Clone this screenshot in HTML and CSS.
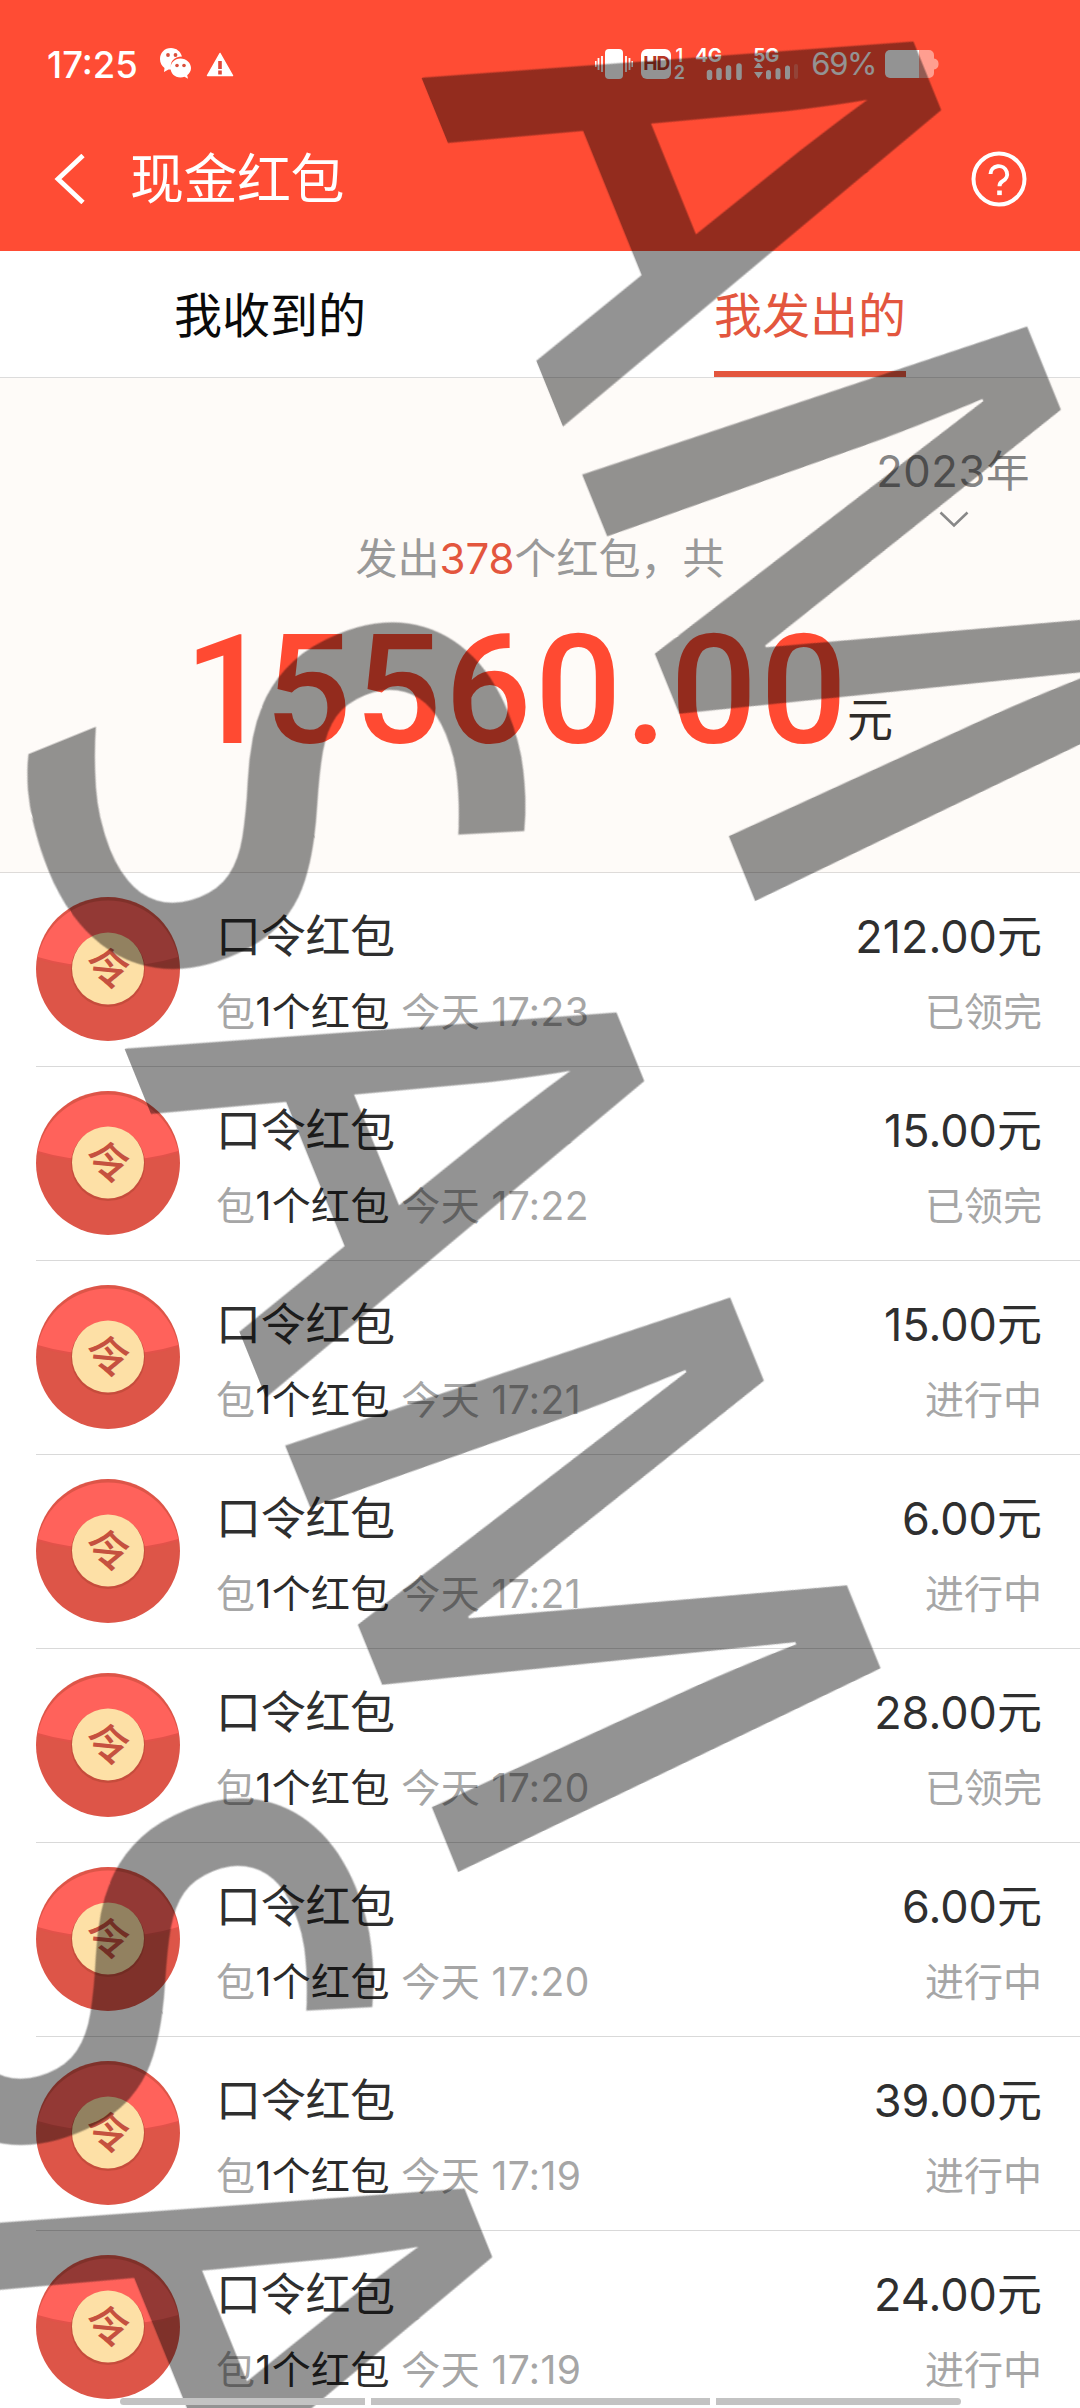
FILE: index.html
```html
<!DOCTYPE html>
<html lang="zh-CN">
<head>
<meta charset="utf-8">
<title>现金红包</title>
<link rel="stylesheet" href="styles.css">
</head>
<body>
<svg class="defs" aria-hidden="true">
  <symbol id="packet" viewBox="0 0 144 144">
    <circle cx="72" cy="72" r="72" fill="#dd5548"/>
    <path d="M1.5 61A72 72 0 0 1 142.500 61Q110 71 72 71T1.500 61Z" fill="#ff625b"/>
    <path d="M1.500 61Q34 71 72 71T142.500 61" fill="none" stroke="#e2524a" stroke-width="2"/>
    <circle cx="72" cy="73" r="37" fill="#c64c3c"/>
    <circle cx="72" cy="71.500" r="36" fill="#fde0a6"/>
    <text x="72" y="88" text-anchor="middle" transform="rotate(6 72 72)" class="packet-char">令</text>
  </symbol>
</svg>
<div class="screen">
  <header class="header">
    <div class="status">
      <span class="clock">17:25</span>
      <svg class="ic-wechat" width="31" height="32" viewBox="0 0 31 32">
        <path d="M11 0C4.500 0 0 4.800 0 11c0 4 1.800 7 4.500 9L4 24l4.500-2.500h3C9 14 14 8.500 22 8.500 20.500 3.500 16.500 0 11 0Z" fill="#fff"/>
        <path d="M20.500 10.500C14.500 10.500 10.500 15 10.500 20s4 9.500 10 9.500c1.500 0 2.800-.2 4-.7l3.500 2-.8-3.500C29.500 25.500 31 23 31 20c0-5-4.500-9.500-10.500-9.500Z" fill="#fff"/>
        <circle cx="8" cy="7" r="1.900" fill="#d9503c"/><circle cx="15.500" cy="7" r="1.900" fill="#d9503c"/>
        <circle cx="17" cy="17.500" r="1.800" fill="#d9503c"/><circle cx="24" cy="17.500" r="1.800" fill="#d9503c"/>
      </svg>
      <svg class="ic-warn" width="28" height="25" viewBox="0 0 28 25">
        <path d="M14 1.500 26.500 23.500H1.500Z" fill="#fff" stroke="#fff" stroke-width="1.500" stroke-linejoin="round"/>
        <path d="M14 9v8M14 18.500v4" stroke="#e0483a" stroke-width="3.600"/>
      </svg>
      <div class="status-right">
        <svg width="38" height="32" viewBox="0 0 38 32">
          <rect x="10" y="1" width="18" height="30" rx="4" fill="#fff"/>
          <path d="M7 8v16M31 8v16M3.500 10v12M34.500 10v12M.7 13v6M37.300 13v6" stroke="#fff" stroke-width="1.800"/>
        </svg>
        <span class="hd">HD</span>
        <span class="sims"><i>1</i><i>2</i></span>
        <div class="net net-4g">
          <span class="gen">4G</span>
          <svg width="38" height="17" viewBox="0 0 38 17"><path d="M3.500 9.500v5M13 7.500v7M22.500 5v9.500M33 3v11.500" stroke="#fff" stroke-width="5.500" stroke-linecap="round"/></svg>
        </div>
        <div class="net net-5g">
          <span class="gen">5G</span>
          <svg width="48" height="17" viewBox="0 0 48 17"><path d="M1 5 5.500-1 10 5ZM1 9h9l-4.500 6.500Z" fill="#fff"/><path d="M15.500 9.500v4.500M25 7.500v6.500M34.500 5v9" stroke="#fff" stroke-width="5" stroke-linecap="round"/><path d="M43 3v11" stroke="#ff7660" stroke-width="4" stroke-linecap="round"/></svg>
        </div>
        <span class="pct">69%</span>
        <svg width="54" height="28" viewBox="0 0 54 28">
          <path d="M6 0H44a5 5 0 0 1 5 5v3.500a5 5 0 0 1 4.500 5.500 5 5 0 0 1-4.500 5.500V23a5 5 0 0 1-5 5H6Z" fill="#ff9e90"/>
          <path d="M5 0H34V28H5a5 5 0 0 1-5-5V5a5 5 0 0 1 5-5Z" fill="#fff"/>
        </svg>
      </div>
    </div>
    <div class="nav">
      <svg class="back" width="34" height="50" viewBox="0 0 34 50"><path d="M30 1.500 5 25 30 48.500" fill="none" stroke="#fff" stroke-width="4.800"/></svg>
      <h1>现金红包</h1>
      <svg class="help" width="56" height="56" viewBox="0 0 56 56">
        <circle cx="28" cy="28" r="25.500" fill="none" stroke="#fff" stroke-width="4"/>
        <path d="M19.500 23a8.300 8 0 1 1 12 7.300q-3 1.700-3 5" fill="none" stroke="#fff" stroke-width="4"/>
        <rect x="26.200" y="39.500" width="4.600" height="4.600" fill="#fff"/>
      </svg>
    </div>
  </header>

  <nav class="tabs">
    <div class="tab"><span>我收到的</span></div>
    <div class="tab active"><span>我发出的</span></div>
  </nav>

  <section class="summary">
    <div class="year"><span>2023年</span>
      <svg width="30" height="17" viewBox="0 0 30 17"><path d="M1.500 1.500 15 14.500 28.500 1.500" fill="none" stroke="#888" stroke-width="2.600"/></svg>
    </div>
    <p class="count">发出<b>378</b>个红包，共</p>
    <p class="total"><strong>15560.00</strong><span>元</span></p>
  </section>

  <ul class="list">
    <li><svg class="pk"><use href="#packet"/></svg><div class="info"><div class="t">口令红包</div><div class="s">包<b>1个红包</b> 今天 17:23</div></div><div class="amt"><div class="t">212.00元</div><div class="s">已领完</div></div></li>
    <li><svg class="pk"><use href="#packet"/></svg><div class="info"><div class="t">口令红包</div><div class="s">包<b>1个红包</b> 今天 17:22</div></div><div class="amt"><div class="t">15.00元</div><div class="s">已领完</div></div></li>
    <li><svg class="pk"><use href="#packet"/></svg><div class="info"><div class="t">口令红包</div><div class="s">包<b>1个红包</b> 今天 17:21</div></div><div class="amt"><div class="t">15.00元</div><div class="s">进行中</div></div></li>
    <li><svg class="pk"><use href="#packet"/></svg><div class="info"><div class="t">口令红包</div><div class="s">包<b>1个红包</b> 今天 17:21</div></div><div class="amt"><div class="t">6.00元</div><div class="s">进行中</div></div></li>
    <li><svg class="pk"><use href="#packet"/></svg><div class="info"><div class="t">口令红包</div><div class="s">包<b>1个红包</b> 今天 17:20</div></div><div class="amt"><div class="t">28.00元</div><div class="s">已领完</div></div></li>
    <li><svg class="pk"><use href="#packet"/></svg><div class="info"><div class="t">口令红包</div><div class="s">包<b>1个红包</b> 今天 17:20</div></div><div class="amt"><div class="t">6.00元</div><div class="s">进行中</div></div></li>
    <li><svg class="pk"><use href="#packet"/></svg><div class="info"><div class="t">口令红包</div><div class="s">包<b>1个红包</b> 今天 17:19</div></div><div class="amt"><div class="t">39.00元</div><div class="s">进行中</div></div></li>
    <li><svg class="pk"><use href="#packet"/></svg><div class="info"><div class="t">口令红包</div><div class="s">包<b>1个红包</b> 今天 17:19</div></div><div class="amt"><div class="t">24.00元</div><div class="s">进行中</div></div></li>
  </ul>

  <div class="mark mark-1"><span class="ms">S</span><span class="ma">A</span><span class="mm">M</span></div>
  <div class="mark mark-2"><span class="ms">S</span><span class="ma">A</span><span class="mm">M</span></div>
  <div class="mark mark-3"><span class="ms">S</span><span class="ma">A</span><span class="mm">M</span></div>

  <div class="homebar"><i></i><i></i><i></i></div>
</div>
</body>
</html>
```
FILE: styles.css
```css
* { box-sizing: border-box; margin: 0; padding: 0; }
body {
  width: 1080px;
  height: 2408px;
  overflow: hidden;
  background: #fff;
  font-family: Inter, "Noto Sans CJK SC", sans-serif;
  color: #2f2f2f;
}
b, i { font-weight: inherit; font-style: normal; }
svg { display: block; flex: none; }
.defs { position: absolute; width: 0; height: 0; }
.screen { position: relative; width: 1080px; height: 2408px; overflow: hidden; }

.header { height: 251px; background: #ff4c34; color: #fff; }
.status { height: 88px; padding: 40px 141px 0 47px; display: flex; align-items: center; }
.clock { font-size: 36.500px; width: 94px; white-space: nowrap; font-weight: 500; letter-spacing: 0; line-height: 46px; padding-top: 2px; }
.ic-wechat { margin-left: 19px; }
.ic-warn { margin-left: 15px; }
.status-right { flex: 1; display: flex; align-items: center; justify-content: flex-end; }
.hd { width: 30px; height: 30px; margin-left: 8px; border-radius: 6px; background: #fff; color: #b53624; font-size: 19px; font-weight: 700; letter-spacing: -1px; line-height: 30px; text-align: center; }
.sims { display: flex; flex-direction: column; width: 12px; margin-left: 2px; font-size: 18px; line-height: 17px; font-weight: 600; align-items: center; }
.net { display: flex; flex-direction: column; height: 31px; }
.gen { font-size: 19px; line-height: 14px; font-weight: 700; letter-spacing: -0.500px; }
.net-4g { margin-left: 10px; }
.net-4g svg { margin-left: 11px; }
.net-5g { margin-left: 9px; }
.pct { margin: 0 9px 0 10px; font-size: 31px; line-height: 32px; letter-spacing: -1.400px; }

.nav { display: flex; align-items: center; height: 56px; margin-top: 63px; padding: 0 53px 0 53px; }
.back { margin-right: 43px; }
.nav h1 { flex: 1; font-size: 54px; line-height: 56px; font-weight: 400; letter-spacing: -0.500px; padding-top: 1px; }

.tabs { height: 127px; display: flex; border-bottom: 1px solid #dcdcdc; }
.tab { flex: 1; display: flex; justify-content: center; font-size: 48px; color: #0a0a0a; }
.tab span { line-height: 120px; padding-top: 5px; height: 127px; }
.tab.active { color: #e3563e; }
.tab.active span { border-bottom: 6px solid #e3563e; height: 126px; }

.summary { height: 495px; background: #fefbf8; border-bottom: 1px solid #dedbd9; }
.year { padding: 65px 50px 0 0; display: flex; flex-direction: column; align-items: flex-end; font-size: 43.500px; line-height: 56px; letter-spacing: 0.600px; color: #858585; }
.year svg { margin: 12px 61px 0 0; }
.count { margin-top: 6px; text-align: center; font-size: 42px; line-height: 50px; color: #999; }
.count b { color: #e3563e; }
.total { display: flex; justify-content: center; align-items: baseline; margin-top: 27px; line-height: 160px; color: #2f2c2a; }
.total strong { font-family: Roboto, sans-serif; font-size: 153px; font-weight: 500; color: #ff4a32; letter-spacing: 3px; }
.total strong::first-letter { letter-spacing: -6px; }
.total strong { display: block; }
.total span { font-size: 46px; margin-left: 0; line-height: 60px; transform: translate(-3px, -7px); }

.list { list-style: none; }
.list li { position: relative; height: 194px; display: flex; padding: 24px 38px 0 36px; }
.list li::after { content: ""; position: absolute; left: 36px; right: 0; bottom: 0; height: 1px; background: #d9d9d9; }
.pk { width: 144px; height: 144px; }
.packet-char { font: 500 44px "Noto Sans CJK SC", sans-serif; fill: #c5513f; }
.info { flex: 1; margin-left: 36px; }
.amt { text-align: right; }
.t { font-size: 45px; line-height: 56px; padding-top: 12px; }
.info .t { letter-spacing: -0.300px; }
.amt .t { letter-spacing: 0; }
.s { font-size: 39px; line-height: 50px; margin-top: 22px; color: #a6a6a6; white-space: pre; }
.info .s { letter-spacing: 0.400px; }
.s b { color: #2b2b2b; }

/* Watermark: baseline of every letter sits on the rotated x axis */
.mark { position: absolute; width: 0; height: 0; transform: rotate(67.920deg); font-family: "Open Sans", sans-serif; font-weight: 600; color: #000; opacity: 0.425; }
.mark span { position: absolute; top: -752px; height: 1000px; width: max-content; font-size: 655px; line-height: 1000px; transform-origin: 50% 752px; }
.mark-1 { left: 424.500px; top: 80.500px; }
.mark-2 { left: 128px; top: 1052px; }
.mark-3 { left: -24px; top: 2228px; }
.mark .ms { left: -183px; transform: translate(-50%, -3px) scale(0.880, 1.010); }
.mark .ma { left: 184px; transform: translateX(-50%) scaleX(0.870); }
.mark .mm { left: 654px; transform: translateX(-50%) matrix3d(0.957, 0, 0, 0, 0, 1.150, 0, -0.000321, 0, 0, 1, 0, 0, 0, 0, 1); }

.homebar { position: absolute; left: 120px; bottom: 3px; width: 841px; display: flex; gap: 6px; }
.homebar i { flex: 245; height: 7px; background: #c3c3c3; }
.homebar i:nth-child(2) { flex: 338; }
.homebar i:first-child { border-radius: 4px 0 0 4px; }
.homebar i:last-child { border-radius: 0 4px 4px 0; }
```
